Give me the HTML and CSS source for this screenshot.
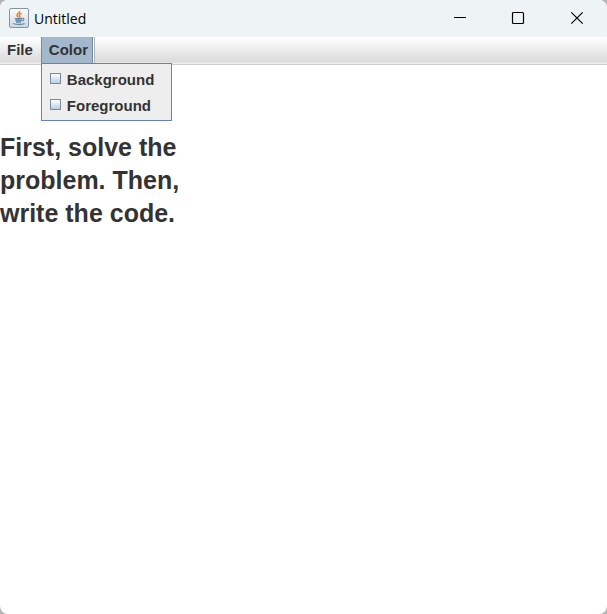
FILE: index.html
```html
<!DOCTYPE html>
<html lang="en">
<head>
<meta charset="utf-8">
<meta name="viewport" content="width=device-width, initial-scale=1">
<title>Untitled</title>
<link rel="stylesheet" href="styles.css">
</head>
<body>
<div class="window">
  <header class="titlebar">
    <svg class="app-icon" width="20" height="20" viewBox="0 0 20 20" aria-hidden="true">
      <defs>
        <linearGradient id="tile" x1="0" y1="0" x2="0" y2="1">
          <stop offset="0" stop-color="#ffffff"/>
          <stop offset="1" stop-color="#cbd6de"/>
        </linearGradient>
      </defs>
      <rect x="0.5" y="0.5" width="19" height="19" rx="1.5" fill="url(#tile)" stroke="#8296a8"/>
      <path d="M10.600 2.800c1 2-2.700 2.600-2.600 4.400 0 1 1 1.500 1.500 2.300M12.600 5.300c-1.800.8-2.800 1.600-1.900 2.700.5.700.2 1.300-.4 1.800" fill="none" stroke="#e8883c" stroke-width="1.600"/>
      <path d="M6 10.500h7l-.6 3.400H7z" fill="#8aa9bf"/>
      <path d="M5.800 10.500h7.400M6.400 12.300h6.200M7 14.200h5M13 10.400c2.600-.6 2.600 2-.2 2.600" fill="none" stroke="#5f86a3" stroke-width="1.100"/>
      <path d="M4.200 15.400c1.600 1.300 9 1.400 11.400 0" fill="none" stroke="#5f86a3" stroke-width="1.200"/>
    </svg>
    <h1 class="title">Untitled</h1>
    <div class="controls">
      <button class="control" type="button" aria-label="Minimize">
        <svg width="14" height="14" viewBox="0 0 14 14"><path d="M2 6.500h12" fill="none" stroke="#000"/></svg>
      </button>
      <button class="control" type="button" aria-label="Maximize">
        <svg width="14" height="14" viewBox="0 0 14 14"><rect x="1.500" y="1.500" width="11" height="11" rx="1" fill="none" stroke="#000" stroke-width="1.200"/></svg>
      </button>
      <button class="control" type="button" aria-label="Close">
        <svg width="14" height="14" viewBox="0 0 14 14"><path d="M1.300 1.300l11.400 11.400M12.700 1.300l-11.400 11.400" fill="none" stroke="#000" stroke-width="1.200"/></svg>
      </button>
    </div>
  </header>
  <nav class="menubar">
    <button class="menu" type="button">File</button>
    <div class="menu-group">
      <button class="menu menu-open" type="button" aria-expanded="true">Color</button>
      <div class="popup">
        <label class="item"><input class="check" type="checkbox">Background</label>
        <label class="item"><input class="check" type="checkbox">Foreground</label>
      </div>
    </div>
  </nav>
  <main class="content">
    <p class="quote">First, solve the problem. Then, write the code.</p>
  </main>
</div>
</body>
</html>
```
FILE: styles.css
```css
* {
  box-sizing: border-box;
}

body {
  margin: 0;
  background: #b4b4b4;
  color: #333;
  font-family: "Liberation Sans", Arial, sans-serif;
}

.window {
  display: flex;
  flex-direction: column;
  min-height: 100vh;
  overflow: hidden;
  border-radius: 8px;
  background: #fff;
}

.titlebar {
  display: flex;
  align-items: center;
  height: 37px;
  padding: 0 1px 1px 9px;
  background: #eef3f6;
}

.app-icon {
  margin-right: 5px;
}

.title {
  margin: 0;
  color: #000;
  font: 400 14px "Open Sans", "Noto Sans", sans-serif;
}

.controls {
  display: flex;
  align-self: stretch;
  margin-left: auto;
}

.control {
  display: flex;
  align-items: center;
  justify-content: center;
  width: 59px;
  padding: 0;
  border: 0;
  background: transparent;
}

.menubar {
  display: flex;
  height: 28px;
  border-bottom: 1px solid #ccc;
  background: linear-gradient(#fff, #dadada 25px, #eee 26px);
}

.menu {
  height: 26px;
  padding: 0 8px 2px 7px;
  border: 0;
  background: transparent;
  color: #333;
  font: bold 15px "Liberation Sans", Arial, sans-serif;
}

.menu-group {
  position: relative;
}

.menu-open {
  padding: 0 4px 2px 7px;
  border-left: 1px solid #7a8a99;
  border-right: 1px solid #7a8a99;
  background: #a3b8cc;
  box-shadow: 1px 0 #fff, 2px 0 #a3b8cc;
}

.popup {
  position: absolute;
  top: 26px;
  left: 0;
  padding: 2px 17px 2px 8px;
  border: 1px solid #6382bf;
  background: #eee;
}

.item {
  display: flex;
  align-items: center;
  gap: 6px;
  height: 26px;
  font-size: 15px;
  font-weight: bold;
}

.check {
  flex: none;
  appearance: none;
  width: 11px;
  height: 11px;
  margin: 0 0 2px;
  border: 1px solid #7a8a99;
  background: linear-gradient(#fff, #b8cfe5);
}

.content {
  flex: 1;
  padding-top: 66px;
}

.quote {
  max-width: 200px;
  margin: 0;
  font-size: 25px;
  font-weight: bold;
  line-height: 33px;
}
```
